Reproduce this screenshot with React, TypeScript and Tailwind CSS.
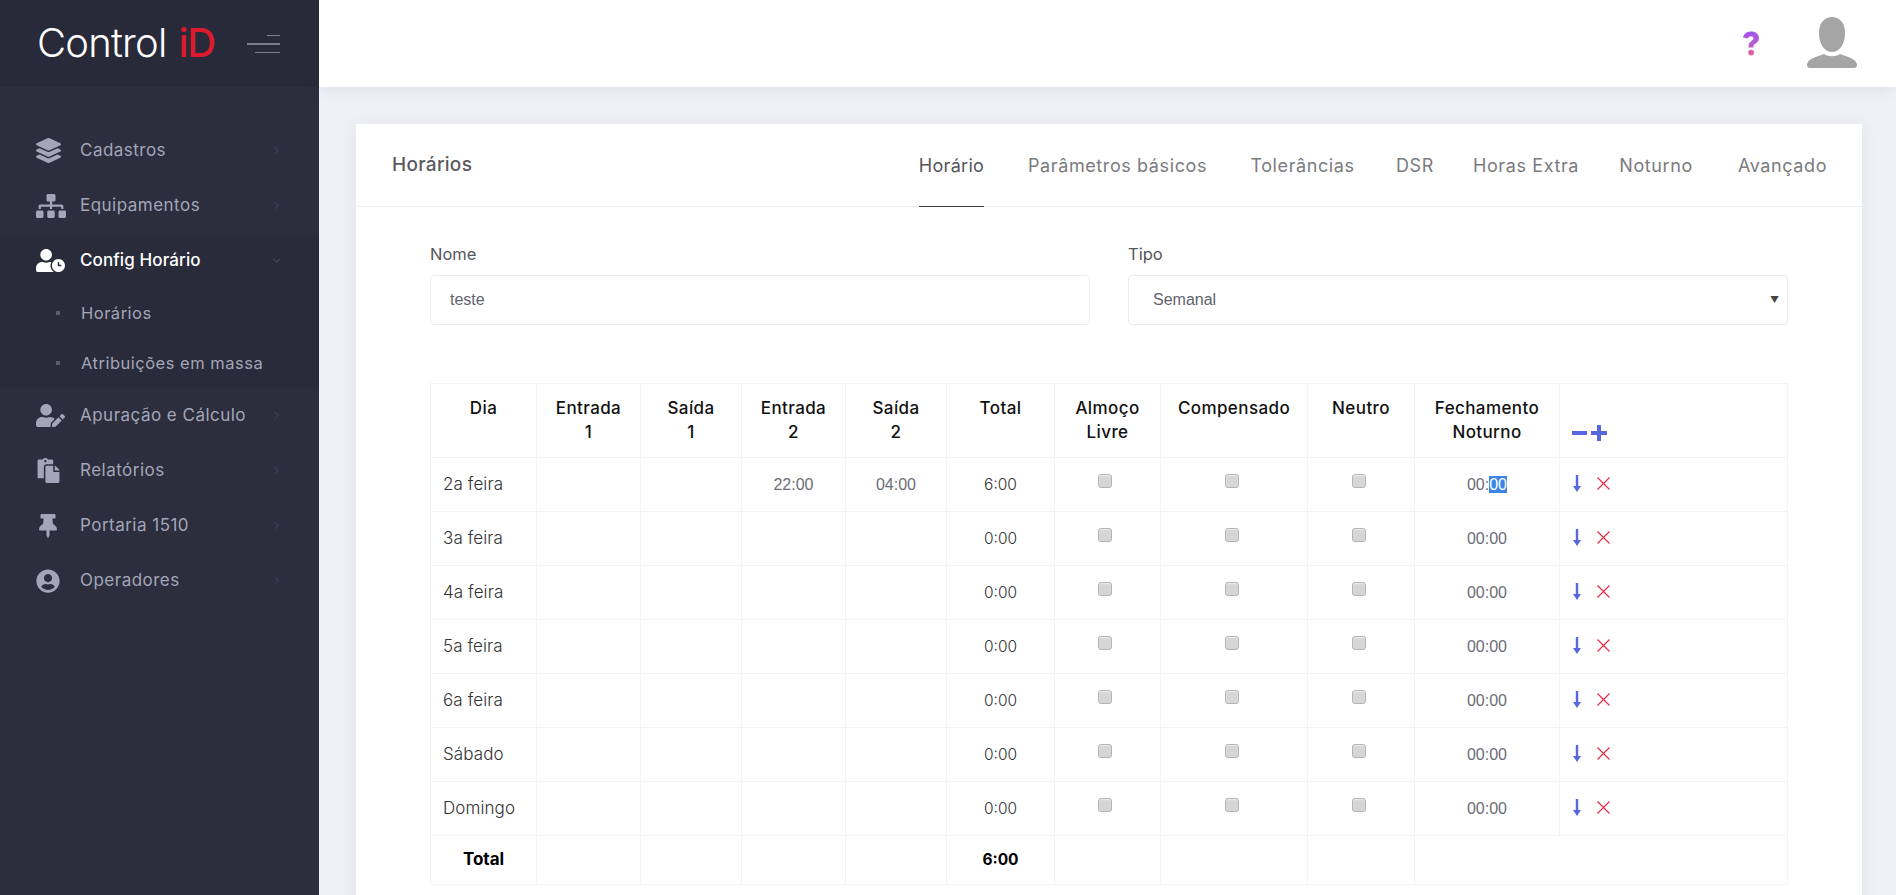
import React from "react";
import { FaLayerGroup, FaSitemap, FaUserClock, FaUserEdit, FaPaste, FaThumbtack, FaUserCircle } from "react-icons/fa";
import { ChevronRight, ChevronDown } from "lucide-react";

const nav1 = [
  { label: "Cadastros", Icon: FaLayerGroup, size: 25 },
  { label: "Equipamentos", Icon: FaSitemap, size: 30 },
];
const nav2 = [
  { label: "Apuração e Cálculo", Icon: FaUserEdit, size: 29 },
  { label: "Relatórios", Icon: FaPaste, size: 25 },
  { label: "Portaria 1510", Icon: FaThumbtack, size: 24 },
  { label: "Operadores", Icon: FaUserCircle, size: 24 },
];

function NavItem({ label, Icon, size }: { label: string; Icon: React.ComponentType<{ size?: number }>; size: number }) {
  return (
    <div className="flex h-[55px] items-center pl-[36px] text-[#a3a5b8]">
      <span className="flex w-[44px] shrink-0 items-center"><Icon size={size} /></span>
      <span className="flex-1 text-[17px] tracking-[0.48px]">{label}</span>
      <ChevronRight size={13} strokeWidth={1.2} className="mr-[36px] text-[#52556a]" />
    </div>
  );
}

const tabs = [
  { t: "Parâmetros básicos", w: "w-[179px]" },
  { t: "Tolerâncias", w: "w-[103px]" },
  { t: "DSR", w: "w-[34px]" },
  { t: "Horas Extra", w: "w-[100px]" },
  { t: "Noturno", w: "w-[72px]" },
  { t: "Avançado", w: "w-[93px]" },
];
const days = ["2a feira", "3a feira", "4a feira", "5a feira", "6a feira", "Sábado", "Domingo"];
const cols = [106, 104, 101, 104, 101, 108, 106, 147, 107, 145, 228];
const headers: string[][] = [["Dia"], ["Entrada", "1"], ["Saída", "1"], ["Entrada", "2"], ["Saída", "2"], ["Total"], ["Almoço", "Livre"], ["Compensado"], ["Neutro"], ["Fechamento", "Noturno"]];
const th = "border border-[#f2f3f6] align-top pt-[12px] text-center text-[17px] font-[450] leading-[24px] tracking-[0.4px] text-[#111]";
const td = "border border-[#f2f3f6] p-0 text-center";
const arial = "[font-family:'Liberation_Sans',Arial,sans-serif]";

function Check() {
  return (
    <input
      type="checkbox"
      readOnly
      className="relative left-[-2.5px] top-[-5px] inline-block h-[14px] w-[14px] appearance-none rounded-[3px] border border-[#b4b4b4] bg-[#d6d6d6] align-middle shadow-[inset_0_1px_1px_#eee]"
    />
  );
}

function Time({ value, selected }: { value: string; selected?: boolean }) {
  return (
    <span className={`${arial} text-[16px] text-[#6b6d78]`}>
      {selected ? (
        <>
          00:<span className="bg-[#3a84e6] text-white">00</span>
        </>
      ) : (
        value
      )}
    </span>
  );
}

function ArrowDown() {
  return (
    <svg width="10" height="17" viewBox="0 0 10 17" className="shrink-0">
      <path d="M5 0v13" stroke="#5867dd" strokeWidth="2.400" fill="none" />
      <path d="M1 11h8L5 17z" fill="#5867dd" />
    </svg>
  );
}

function CloseX() {
  return (
    <svg width="13" height="13" viewBox="0 0 13 13" className="shrink-0">
      <path d="M.5.5l12 12M12.500.5l-12 12" stroke="#ea2540" strokeWidth="1.100" fill="none" />
    </svg>
  );
}

export default function App() {
  return (
    <div className="flex h-screen w-full overflow-hidden bg-[#f0f1f7] [font-family:Inter,sans-serif]">
      <aside className="w-[319px] shrink-0 bg-[#2c2e3e]">
        <div className="flex h-[87px] items-center bg-[#282a39] pl-[37px]">
          <span className="mb-[2px] text-[40px] font-light leading-none tracking-[-0.8px] text-white">Control</span>
          <span className="mb-[2px] ml-[12px] text-[40px] font-medium leading-none tracking-[-1.2px] text-[#dc1a2e]">iD</span>
          <div className="ml-[32px] flex w-[33px] flex-col items-end gap-[7px]">
            <span className="h-px w-[13px] bg-[#7c7e8e]" />
            <span className="h-[2px] w-[33px] bg-[#7c7e8e]" />
            <span className="h-px w-[25px] bg-[#7c7e8e]" />
          </div>
        </div>
        <nav className="pt-[36px]">
          {nav1.map((n) => (
            <NavItem key={n.label} {...n} />
          ))}
          <div className="bg-[#292b3a]">
            <div className="flex h-[55px] items-center pl-[36px] text-white">
              <span className="flex w-[44px] shrink-0 items-center"><FaUserClock size={29} /></span>
              <span className="flex-1 text-[17px] font-medium tracking-[0.1px]">Config Horário</span>
              <ChevronDown size={13} strokeWidth={1.2} className="mr-[36px] text-[#6b6e80]" />
            </div>
            {["Horários", "Atribuições em massa"].map((s) => (
              <div key={s} className="flex h-[50px] items-center pl-[56px] text-[16.5px] tracking-[0.5px] text-[#a3a5b8]">
                <span className="mr-[21px] h-[4px] w-[4px] bg-[#5a5c6c]" />
                {s}
              </div>
            ))}
          </div>
          {nav2.map((n) => (
            <NavItem key={n.label} {...n} />
          ))}
        </nav>
      </aside>

      <div className="min-w-0 flex-1">
        <header className="flex h-[87px] items-center justify-end gap-[47px] bg-white pr-[39px] shadow-[0_1px_15px_rgba(69,65,78,0.1)]">
          <svg width="18" height="25" viewBox="0 0 18 25">
            <defs>
              <linearGradient id="q" x1="0" y1="0" x2="0" y2="1">
                <stop offset="0" stopColor="#9f55ec" />
                <stop offset="0.55" stopColor="#b85bd0" />
                <stop offset="1" stopColor="#ea659c" />
              </linearGradient>
            </defs>
            <path
              d="M1 6.5C2 2.500 5 .5 9 .5c4.500 0 8 2.700 8 6.600 0 2.900-1.700 4.300-3.500 5.500-1.500 1-2 1.500-2 3v.9H6.600v-1.500c0-2.700 1.200-3.800 2.900-5 1.200-.8 2-1.500 2-2.700 0-1.300-1.100-2.100-2.500-2.100-1.500 0-2.400.8-3.100 2.200zM6.200 21.600a2.900 2.900 0 1 1 5.800 0 2.900 2.900 0 0 1-5.800 0z"
              fill="url(#q)"
            />
          </svg>
          <svg width="50" height="51" viewBox="0 0 50 51" className="mb-[2px]">
            <path d="M25 0c7 0 13 5 13 16 0 9-4 19-13 19S12 25 12 16C12 5 18 0 25 0z" fill="#a5a5a5" />
            <path d="M17 37c3 3 13 3 16 0 7 2.500 17 5 17 11 0 2-1 3-3 3H3c-2 0-3-1-3-3 0-6 10-8.500 17-11z" fill="#a5a5a5" />
          </svg>
        </header>

        <main className="pl-[37px] pr-[34px] pt-[37px]">
          <section className="bg-white pb-[40px] shadow-[0_1px_15px_rgba(69,65,78,0.08)]">
            <div className="flex h-[83px] items-center justify-between border-b border-[#ebedf2] pl-[36px] pr-[33px]">
              <h2 className="text-[19px] font-medium tracking-[0.3px] text-[#5a5a5e]">Horários</h2>
              <div className="flex h-full gap-[44px] whitespace-nowrap text-[18px] tracking-[0.6px] text-[#7b7b80]">
                <span className="-mb-px flex w-[65px] items-center justify-center border-b border-[#444] tracking-[0.3px] text-[#55555a]">Horário</span>
                {tabs.map(({ t, w }) => (
                  <span key={t} className={`flex items-center justify-center ${w}`}>{t}</span>
                ))}
              </div>
            </div>

            <div className="px-[74px] pt-[37px]">
              <div className="grid grid-cols-2 gap-[38px]">
                <label className="block">
                  <span className="block h-[31px] text-[16.5px] leading-[20px] text-[#55555a]">Nome</span>
                  <input
                    defaultValue="teste"
                    className={`${arial} block h-[50px] w-full rounded-[4px] border border-[#ebedf2] px-[19px] text-[16px] text-[#62646e] outline-none`}
                  />
                </label>
                <label className="block">
                  <span className="block h-[31px] text-[16.5px] leading-[20px] text-[#55555a]">Tipo</span>
                  <div className="relative">
                    <select
                      defaultValue="Semanal"
                      className={`${arial} block h-[50px] w-full appearance-none rounded-[4px] border border-[#ebedf2] bg-white px-[24px] text-[16px] text-[#62646e] outline-none`}
                    >
                      <option>Semanal</option>
                    </select>
                    <span className="absolute right-[9px] top-[17px] text-[9px] leading-[16px] text-[#444]">▼</span>
                  </div>
                </label>
              </div>

              <table className="mt-[58px] w-[1357px] table-fixed border-collapse text-[#333]">
                <colgroup>
                  {cols.map((c, i) => (
                    <col key={i} style={{ width: c }} />
                  ))}
                </colgroup>
                <thead>
                  <tr className="h-[74px]">
                    {headers.map((h, i) => (
                      <th key={i} className={th}>
                        {h.map((l) => (
                          <div key={l}>{l}</div>
                        ))}
                      </th>
                    ))}
                    <th className="border border-[#f2f3f6] pl-[12px] pt-[24px] text-left">
                      <div className="flex items-center gap-[4px]">
                        <span className="h-[4px] w-[15px] bg-[#5867dd]" />
                        <span className="relative h-[16px] w-[16px]">
                          <span className="absolute left-0 top-[6px] h-[4px] w-[16px] bg-[#5867dd]" />
                          <span className="absolute left-[6px] top-0 h-[16px] w-[4px] bg-[#5867dd]" />
                        </span>
                      </div>
                    </th>
                  </tr>
                </thead>
                <tbody>
                  {days.map((d, i) => (
                    <tr key={d} className="h-[54px]">
                      <td className="border border-[#f2f3f6] pl-[12px] text-left text-[17px] font-light tracking-[0.1px]">{d}</td>
                      <td className={td} />
                      <td className={td} />
                      <td className={td}>{i === 0 && <Time value="22:00" />}</td>
                      <td className={td}>{i === 0 && <Time value="04:00" />}</td>
                      <td className={`${td} text-[15.5px] font-light`}>{i === 0 ? "6:00" : "0:00"}</td>
                      <td className={td}><Check /></td>
                      <td className={td}><Check /></td>
                      <td className={td}><Check /></td>
                      <td className={td}><Time value="00:00" selected={i === 0} /></td>
                      <td className={`border-x border-t border-[#f2f3f6] pl-[12px] ${i === 6 ? "border-b-0" : "border-b"}`}>
                        <div className="-mt-[3px] flex items-center gap-[15px]">
                          <ArrowDown />
                          <CloseX />
                        </div>
                      </td>
                    </tr>
                  ))}
                  <tr className="h-[49px]">
                    <td className={`${td} text-[17px] font-bold text-black`}>Total</td>
                    <td className={td} />
                    <td className={td} />
                    <td className={td} />
                    <td className={td} />
                    <td className={`${td} text-[15.5px] font-bold text-black`}>6:00</td>
                    <td className={td} />
                    <td className={td} />
                    <td className={td} />
                    <td colSpan={2} className={td} />
                  </tr>
                </tbody>
              </table>
            </div>
          </section>
        </main>
      </div>
    </div>
  );
}
